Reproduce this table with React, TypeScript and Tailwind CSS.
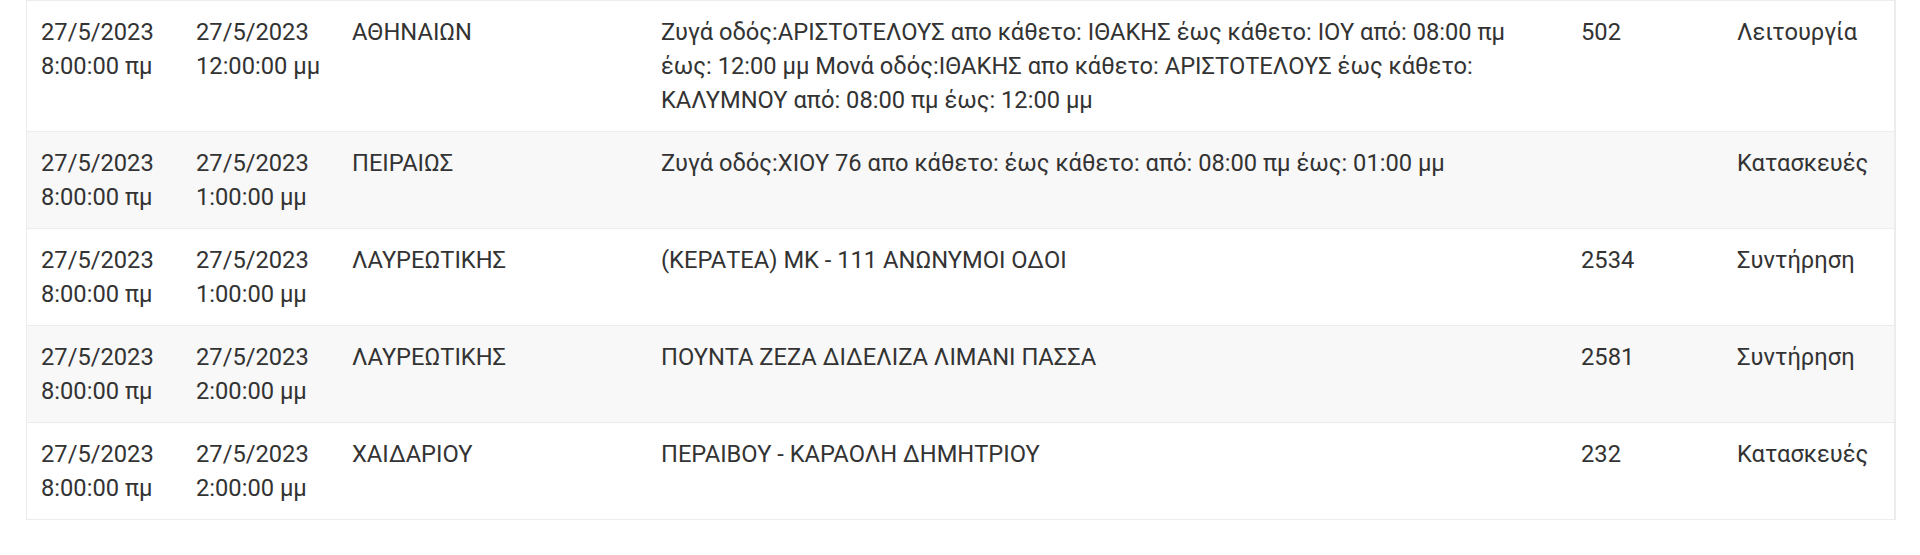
const rows = [
  {
    start: ['27/5/2023', '8:00:00 πμ'],
    end: ['27/5/2023', '12:00:00 μμ'],
    area: 'ΑΘΗΝΑΙΩΝ',
    desc: 'Ζυγά οδός:ΑΡΙΣΤΟΤΕΛΟΥΣ απο κάθετο: ΙΘΑΚΗΣ έως κάθετο: ΙΟΥ από: 08:00 πμ έως: 12:00 μμ Μονά οδός:ΙΘΑΚΗΣ απο κάθετο: ΑΡΙΣΤΟΤΕΛΟΥΣ έως κάθετο: ΚΑΛΥΜΝΟΥ από: 08:00 πμ έως: 12:00 μμ',
    line: '502',
    type: 'Λειτουργία',
  },
  {
    start: ['27/5/2023', '8:00:00 πμ'],
    end: ['27/5/2023', '1:00:00 μμ'],
    area: 'ΠΕΙΡΑΙΩΣ',
    desc: 'Ζυγά οδός:ΧΙΟΥ 76 απο κάθετο: έως κάθετο: από: 08:00 πμ έως: 01:00 μμ',
    line: '',
    type: 'Κατασκευές',
  },
  {
    start: ['27/5/2023', '8:00:00 πμ'],
    end: ['27/5/2023', '1:00:00 μμ'],
    area: 'ΛΑΥΡΕΩΤΙΚΗΣ',
    desc: '(ΚΕΡΑΤΕΑ) ΜΚ - 111 ΑΝΩΝΥΜΟΙ ΟΔΟΙ',
    line: '2534',
    type: 'Συντήρηση',
  },
  {
    start: ['27/5/2023', '8:00:00 πμ'],
    end: ['27/5/2023', '2:00:00 μμ'],
    area: 'ΛΑΥΡΕΩΤΙΚΗΣ',
    desc: 'ΠΟΥΝΤΑ ΖΕΖΑ ΔΙΔΕΛΙΖΑ ΛΙΜΑΝΙ ΠΑΣΣΑ',
    line: '2581',
    type: 'Συντήρηση',
  },
  {
    start: ['27/5/2023', '8:00:00 πμ'],
    end: ['27/5/2023', '2:00:00 μμ'],
    area: 'ΧΑΙΔΑΡΙΟΥ',
    desc: 'ΠΕΡΑΙΒΟΥ - ΚΑΡΑΟΛΗ ΔΗΜΗΤΡΙΟΥ',
    line: '232',
    type: 'Κατασκευές',
  },
]

export default function App() {
  return (
    <div className="min-h-[555px] bg-white font-['Roboto',sans-serif] text-[23.7px] leading-[34px] text-[#333]">
      <div className="ml-[26px] w-[1870px] border border-r-2 border-[#ececec]">
        <table className="w-full table-fixed border-collapse">
          <colgroup>
            <col className="w-[155px]" />
            <col className="w-[156px]" />
            <col className="w-[309px]" />
            <col className="w-[920px]" />
            <col className="w-[156px]" />
            <col className="w-[171px]" />
          </colgroup>
          <tbody>
            {rows.map((r, i) => (
              <tr
                key={i}
                className={`align-top ${i > 0 ? 'border-t border-[#ececec]' : ''} ${i % 2 === 1 ? 'bg-[#f8f8f8]' : 'bg-white'}`}
              >
                <td className="px-[14px] py-[14px]">
                  {r.start[0]}
                  <br />
                  {r.start[1]}
                </td>
                <td className="px-[14px] py-[14px]">
                  {r.end[0]}
                  <br />
                  {r.end[1]}
                </td>
                <td className="px-[14px] py-[14px]">{r.area}</td>
                <td className="px-[14px] py-[14px]">{r.desc}</td>
                <td className="px-[14px] py-[14px]">{r.line}</td>
                <td className="px-[14px] py-[14px]">{r.type}</td>
              </tr>
            ))}
          </tbody>
        </table>
      </div>
    </div>
  )
}
